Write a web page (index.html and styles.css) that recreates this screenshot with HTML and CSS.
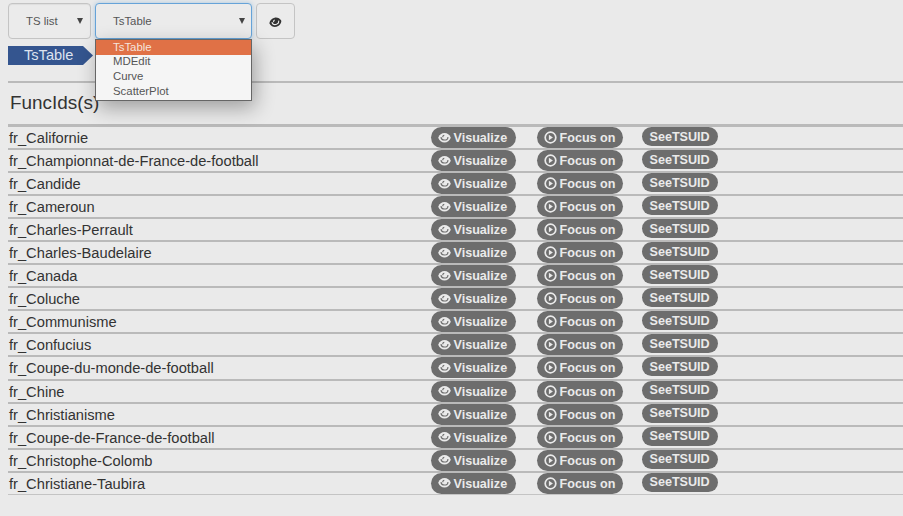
FILE: index.html
```
<!DOCTYPE html>
<html lang="en">
<head>
<meta charset="utf-8">
<title>TsTable</title>
<link rel="stylesheet" href="styles.css">
</head>
<body>
<svg class="sprite" aria-hidden="true">
  <symbol id="eye" viewBox="0 0 14 12">
    <path fill="currentColor" d="M.2 5.600C1.500 2.300 4 .6 7 .6s5.500 1.700 6.800 5C12.500 9 10 10.800 7 10.800S1.500 9 .2 5.600Z"/>
    <path class="lid" d="M3.300 4.800C3.300 7 4.900 8.200 7 8.200s3.700-1.200 3.700-3.400"/>
    <path class="lid" d="M5.200 5.200C5 3.900 5.700 3.200 6.800 3.100"/>
  </symbol>
  <symbol id="play" viewBox="0 0 13 13">
    <circle cx="6.500" cy="6.500" r="5.300" fill="none" stroke="currentColor" stroke-width="1.700"/>
    <path fill="currentColor" d="M4.900 3.800v5.400l4-2.700Z"/>
  </symbol>
</svg>
<div class="toolbar">
  <div class="select source"><span>TS list</span><i class="arrow"></i></div>
  <div class="select viewer"><span>TsTable</span><i class="arrow"></i>
    <ul class="menu"><li class="active">TsTable</li><li>MDEdit</li><li>Curve</li><li>ScatterPlot</li></ul>
  </div>
  <button class="view-button" aria-label="View"><svg><use href="#eye"/></svg></button>
</div>
<div class="crumb"><span>TsTable</span></div>
<main class="table">
  <h1>FuncIds(s)</h1>
  <div class="rows">
    <div class="row"><span class="name">fr_Californie</span><a class="badge visualize"><svg><use href="#eye"/></svg><span>Visualize</span></a><a class="badge focus"><svg><use href="#play"/></svg><span>Focus on</span></a><a class="badge tsuid"><span>SeeTSUID</span></a></div>
    <div class="row"><span class="name">fr_Championnat-de-France-de-football</span><a class="badge visualize"><svg><use href="#eye"/></svg><span>Visualize</span></a><a class="badge focus"><svg><use href="#play"/></svg><span>Focus on</span></a><a class="badge tsuid"><span>SeeTSUID</span></a></div>
    <div class="row"><span class="name">fr_Candide</span><a class="badge visualize"><svg><use href="#eye"/></svg><span>Visualize</span></a><a class="badge focus"><svg><use href="#play"/></svg><span>Focus on</span></a><a class="badge tsuid"><span>SeeTSUID</span></a></div>
    <div class="row"><span class="name">fr_Cameroun</span><a class="badge visualize"><svg><use href="#eye"/></svg><span>Visualize</span></a><a class="badge focus"><svg><use href="#play"/></svg><span>Focus on</span></a><a class="badge tsuid"><span>SeeTSUID</span></a></div>
    <div class="row"><span class="name">fr_Charles-Perrault</span><a class="badge visualize"><svg><use href="#eye"/></svg><span>Visualize</span></a><a class="badge focus"><svg><use href="#play"/></svg><span>Focus on</span></a><a class="badge tsuid"><span>SeeTSUID</span></a></div>
    <div class="row"><span class="name">fr_Charles-Baudelaire</span><a class="badge visualize"><svg><use href="#eye"/></svg><span>Visualize</span></a><a class="badge focus"><svg><use href="#play"/></svg><span>Focus on</span></a><a class="badge tsuid"><span>SeeTSUID</span></a></div>
    <div class="row"><span class="name">fr_Canada</span><a class="badge visualize"><svg><use href="#eye"/></svg><span>Visualize</span></a><a class="badge focus"><svg><use href="#play"/></svg><span>Focus on</span></a><a class="badge tsuid"><span>SeeTSUID</span></a></div>
    <div class="row"><span class="name">fr_Coluche</span><a class="badge visualize"><svg><use href="#eye"/></svg><span>Visualize</span></a><a class="badge focus"><svg><use href="#play"/></svg><span>Focus on</span></a><a class="badge tsuid"><span>SeeTSUID</span></a></div>
    <div class="row"><span class="name">fr_Communisme</span><a class="badge visualize"><svg><use href="#eye"/></svg><span>Visualize</span></a><a class="badge focus"><svg><use href="#play"/></svg><span>Focus on</span></a><a class="badge tsuid"><span>SeeTSUID</span></a></div>
    <div class="row"><span class="name">fr_Confucius</span><a class="badge visualize"><svg><use href="#eye"/></svg><span>Visualize</span></a><a class="badge focus"><svg><use href="#play"/></svg><span>Focus on</span></a><a class="badge tsuid"><span>SeeTSUID</span></a></div>
    <div class="row"><span class="name">fr_Coupe-du-monde-de-football</span><a class="badge visualize"><svg><use href="#eye"/></svg><span>Visualize</span></a><a class="badge focus"><svg><use href="#play"/></svg><span>Focus on</span></a><a class="badge tsuid"><span>SeeTSUID</span></a></div>
    <div class="row"><span class="name">fr_Chine</span><a class="badge visualize"><svg><use href="#eye"/></svg><span>Visualize</span></a><a class="badge focus"><svg><use href="#play"/></svg><span>Focus on</span></a><a class="badge tsuid"><span>SeeTSUID</span></a></div>
    <div class="row"><span class="name">fr_Christianisme</span><a class="badge visualize"><svg><use href="#eye"/></svg><span>Visualize</span></a><a class="badge focus"><svg><use href="#play"/></svg><span>Focus on</span></a><a class="badge tsuid"><span>SeeTSUID</span></a></div>
    <div class="row"><span class="name">fr_Coupe-de-France-de-football</span><a class="badge visualize"><svg><use href="#eye"/></svg><span>Visualize</span></a><a class="badge focus"><svg><use href="#play"/></svg><span>Focus on</span></a><a class="badge tsuid"><span>SeeTSUID</span></a></div>
    <div class="row"><span class="name">fr_Christophe-Colomb</span><a class="badge visualize"><svg><use href="#eye"/></svg><span>Visualize</span></a><a class="badge focus"><svg><use href="#play"/></svg><span>Focus on</span></a><a class="badge tsuid"><span>SeeTSUID</span></a></div>
    <div class="row"><span class="name">fr_Christiane-Taubira</span><a class="badge visualize"><svg><use href="#eye"/></svg><span>Visualize</span></a><a class="badge focus"><svg><use href="#play"/></svg><span>Focus on</span></a><a class="badge tsuid"><span>SeeTSUID</span></a></div>
  </div>
</main>
</body>
</html>
```
FILE: styles.css
```
* { box-sizing: border-box; }
body {
  margin: 0;
  height: 516px;
  overflow: hidden;
  padding: 3px 0 0 8px;
  background: #eaeaea;
  color: #333;
  font-family: "Liberation Sans", Arial, sans-serif;
}
.sprite { display: none; }
.lid { fill: none; stroke: var(--cut); stroke-width: 1.2; }
.toolbar { display: flex; gap: 4px; height: 36px; font-size: 11.4px; }
.select {
  position: relative;
  display: flex;
  align-items: center;
  justify-content: space-between;
  height: 36px;
  padding: 0 6px 0 17px;
  border: 1px solid #c4c4c4;
  border-radius: 4px;
  background: #ebebeb;
  color: #555;
  box-shadow: inset 0 1px 1px rgba(0, 0, 0, .06);
}
.source { width: 83px; padding-right: 7px; }
.viewer { width: 157px; border-color: #66a3d8; box-shadow: 0 0 5px rgba(102, 163, 216, .5); }
.arrow {
  border: 3px solid transparent;
  border-top: 6px solid #444;
  border-bottom: 0;
}
.menu {
  position: absolute;
  z-index: 2;
  top: 35px;
  left: -1px;
  width: 157px;
  height: 62px;
  margin: 0;
  padding: 0;
  list-style: none;
  border: 1px solid #666;
  background: #f5f5f5;
  box-shadow: 3px 7px 20px rgba(0, 0, 0, .32);
}
.menu li { height: 15px; padding-left: 17px; line-height: 13px; }
.menu li:last-child { line-height: 13px; }
.menu .active { line-height: 14px; background: #e07146; color: #f6e4dc; }
.view-button {
  --cut: #ebebeb;
  display: flex;
  align-items: center;
  justify-content: center;
  width: 39px;
  height: 36px;
  padding: 3px 0 0;
  border: 1px solid #c4c4c4;
  border-radius: 4px;
  background: #ebebeb;
  color: #333;
}
.view-button svg { width: 13px; height: 11px; transform: rotate(-12deg); }
.crumb {
  width: 85px;
  height: 19px;
  margin-top: 7px;
  padding-left: 16px;
  background: #34558f;
  color: #dce3ef;
  font-size: 14.6px;
  line-height: 19px;
  clip-path: polygon(0 0, 75px 0, 100% 50%, 75px 100%, 0 100%);
}
.table { margin-top: 16px; border-top: 2px solid #bababa; }
h1 {
  height: 44px;
  margin: 0;
  padding: 1px 0 0 2px;
  border-bottom: 3px solid #bababa;
  font-size: 18.9px;
  font-weight: 400;
  line-height: 38px;
}
.row {
  display: grid;
  grid-template-columns: 422.500px 106px 105px 1fr;
  align-items: start;
  height: 23.050px;
  border-bottom: 2px solid #bababa;
}
.row:last-child { height: 22px; border-bottom: 1px solid #c4c4c4; }
.name { padding-left: 1px; font-size: 14.68px; line-height: 22px; white-space: nowrap; }
.badge {
  --cut: #6d6d6d;
  display: flex;
  align-items: center;
  height: 21px;
  border-radius: 11px;
  background: #6d6d6d;
  color: #eaeaea;
  font-size: 12.600px;
  font-weight: 700;
  line-height: 21px;
  white-space: nowrap;
}
.badge svg { width: 13px; height: 12px; margin-right: 3px; }
.badge span { padding-top: 2px; }
.visualize { width: 85px; padding-left: 7px; }
.focus { width: 86px; padding-left: 7px; }
.focus svg { height: 13px; }
.tsuid { width: 76px; height: 19px; padding-left: 8px; line-height: 18px; }
.tsuid span { padding: 0; }
```
